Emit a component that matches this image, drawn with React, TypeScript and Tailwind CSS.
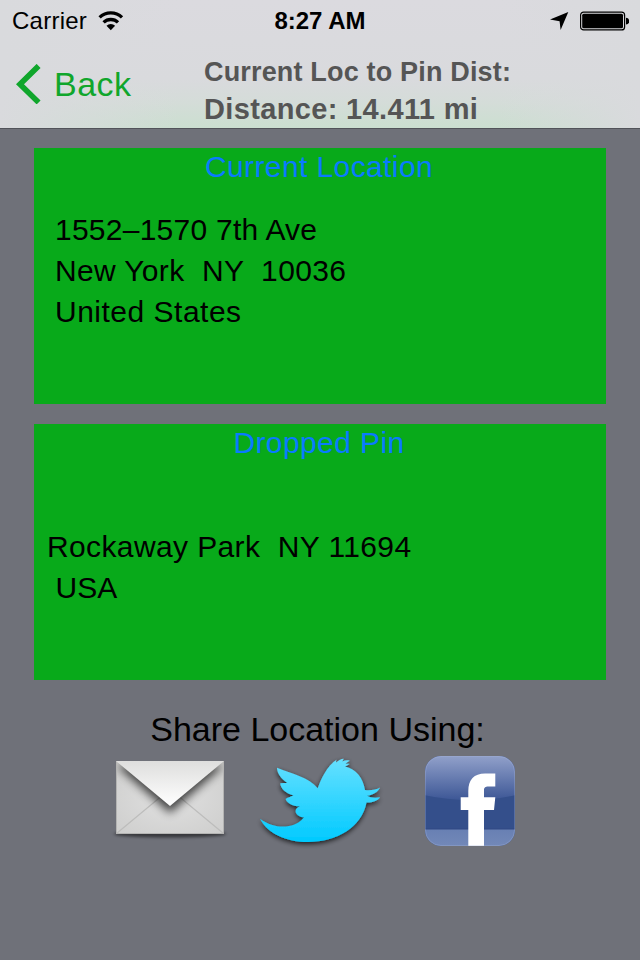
import type { ReactNode } from "react";

const CURRENT_ADDRESS = [
  { text: "1552–1570 7th Ave", tracking: "tracking-[0.25px]" },
  { text: "New York  NY  10036", tracking: "tracking-[0.35px]" },
  { text: "United States", tracking: "tracking-[0.5px]" },
];
const PIN_ADDRESS = [
  { text: "Rockaway Park  NY 11694", tracking: "tracking-[0.38px]" },
  { text: " USA", tracking: "tracking-[0.1px]" },
];

function WifiIcon() {
  return (
    <svg className="w-[26px] h-[20px]" viewBox="0 0 26 20" fill="none" stroke="#000" strokeWidth="3.3">
      <path d="M1.600 6.400a16.200 16.200 0 0 1 22.400 0" />
      <path d="M5.600 11.400a10.400 10.400 0 0 1 14.400 0" />
      <path d="M12.800 19.200l-4.300-4.500a6 6 0 0 1 8.600 0z" fill="#000" stroke="none" />
    </svg>
  );
}

function StatusBar() {
  return (
    <div className="grid grid-cols-3 items-center h-10 pl-3 pr-[11px]">
      <div className="flex items-center">
        <span className="text-[24px] leading-[41px] tracking-[0.25px]">Carrier</span>
        <span className="ml-[11px]"><WifiIcon /></span>
      </div>
      <div className="pr-px text-center text-[24px] leading-[41px] font-bold">8:27 AM</div>
      <div className="flex items-center justify-end gap-[11px]">
        <svg className="w-[19px] h-[19px]" viewBox="0 0 19 19">
          <path d="M18.300 1L10.600 19L9.600 10.300L0 8.500z" fill="#000" />
        </svg>
        <svg className="w-[49px] h-[20px]" viewBox="0 0 49 20">
          <rect x="0.6" y="1.1" width="44" height="17.8" rx="3" fill="none" stroke="#000" strokeWidth="1.2" />
          <rect x="2.2" y="2.7" width="40.8" height="14.6" rx="1.5" fill="#000" />
          <path d="M46 6.800a3.300 3.300 0 0 1 0 6.600z" fill="#000" />
        </svg>
      </div>
    </div>
  );
}

function NavBar() {
  return (
    <div className="flex h-[88px]">
      <button className="flex items-center w-[204px] pl-4 text-[#10a62c]">
        <svg className="w-[25px] h-[40px]" viewBox="0 0 25 40" fill="none" stroke="currentColor" strokeWidth="5.600">
          <path d="M22.600 1.900L4 20.200L22.600 38.400" />
        </svg>
        <span className="ml-[13px] text-[34px] leading-[40px] tracking-[0.5px]">Back</span>
      </button>
      <div className="pt-[14px] text-[#555555] font-bold whitespace-nowrap">
        <div className="text-[27px] leading-[37px] tracking-[0.17px]">Current Loc to Pin Dist:</div>
        <div className="text-[29px] leading-[37px] tracking-[0.35px]">Distance: 14.411 mi</div>
      </div>
    </div>
  );
}

function LocationCard({ title, children }: { title: string; children: ReactNode }) {
  return (
    <section className="h-64 bg-[#08aa1a]">
      <h2 className="h-9 pt-px pr-[2px] text-center text-[30px] leading-[36px] tracking-[0.4px] text-[#0a7aff]">{title}</h2>
      {children}
    </section>
  );
}

function AddressLines({ lines }: { lines: { text: string; tracking: string }[] }) {
  return (
    <>
      {lines.map(line => (
        <p key={line.text} className={`whitespace-pre text-[30px] leading-[41px] ${line.tracking}`}>{line.text}</p>
      ))}
    </>
  );
}

function MailIcon() {
  return (
    <svg className="w-[120px] h-[90px]" viewBox="0 0 120 90">
      <defs>
        <linearGradient id="mailFlap" x1="0" y1="0" x2="0" y2="1">
          <stop offset="0" stopColor="#dededd" />
          <stop offset="1" stopColor="#ffffff" />
        </linearGradient>
        <radialGradient id="mailBody" cx="0.5" cy="0.5" r="0.65">
          <stop offset="0" stopColor="#e0e0e0" />
          <stop offset="1" stopColor="#cfcfce" />
        </radialGradient>
        <filter id="mailBlur" x="-20%" y="-50%" width="140%" height="200%">
          <feGaussianBlur stdDeviation="5" />
        </filter>
        <filter id="mailBase" x="-20%" y="-100%" width="140%" height="300%">
          <feGaussianBlur stdDeviation="1.8" />
        </filter>
        <clipPath id="mailClip"><rect x="6" y="6" width="108" height="73" /></clipPath>
      </defs>
      <ellipse cx="60" cy="79" rx="56" ry="3.6" fill="#000" opacity="0.5" filter="url(#mailBase)" />
      <rect x="6" y="6" width="108" height="73" fill="url(#mailBody)" />
      <path d="M6.500 78.500L60 34l53.500 44.500" fill="none" stroke="#bdbdbc" strokeWidth="1.2" />
      <g clipPath="url(#mailClip)">
        <path d="M6 10h108L60 58z" fill="#000" opacity="0.7" filter="url(#mailBlur)" />
      </g>
      <rect x="6.5" y="6.5" width="107" height="72" fill="none" stroke="#b4b4b3" />
      <path d="M6 6h108L60 51z" fill="url(#mailFlap)" />
    </svg>
  );
}

function TwitterIcon() {
  return (
    <svg className="w-[140px] h-[105px]" viewBox="0 0 140 105">
      <defs>
        <linearGradient id="bird" x1="0" y1="0" x2="0" y2="1">
          <stop offset="0" stopColor="#66e0ff" />
          <stop offset="1" stopColor="#00caff" />
        </linearGradient>
        <filter id="birdShadow" x="-10%" y="-10%" width="120%" height="120%">
          <feDropShadow dx="0" dy="2" stdDeviation="2.4" floodColor="#000" floodOpacity="0.75" />
        </filter>
      </defs>
      <path
        fill="url(#bird)"
        filter="url(#birdShadow)"
        d="M10 68.7C20 76 30 77.500 39 76C46 75 51 71.500 54 67.300C49 67.300 45.500 64 45.600 61C45.700 58.500 48 57 50 56.300C43 56.500 36 52.500 35.700 49C37 48 41 46.500 43.500 45.600C36 43.500 30 38 30.300 33.300C32.500 33 35 33 37.300 33C31 28.500 27 23 27 17.700C42 24 59 27 67.700 38.300C71 29 77 16 86.500 9.700C86 11 86 12 86 12.600C88 10.500 91 8.800 93.800 8.700C93 10 92.500 10.900 92.300 11.500C94.500 10.500 97 10 99.800 10.700C98 11.800 96.500 12.800 95.500 13.800C97.500 13.600 99 13.500 99.500 14C98 15 96.500 16 95 16.600C106 19 113 28 115 40C120 40.500 126 40 130.200 37.500C128 42 123 45 117 45.800C120 47.800 125 48 130.200 47.300C127 51.500 121 53 116.500 52.500C112 77 87 92 58 92C36 92 17 83 10 68.700Z"
      />
    </svg>
  );
}

function FacebookIcon() {
  return (
    <svg className="w-[92px] h-[92px]" viewBox="0 0 92 92">
      <defs>
        <linearGradient id="fbGloss" x1="0" y1="0" x2="0" y2="1">
          <stop offset="0" stopColor="#93a2cb" />
          <stop offset="1" stopColor="#3d5796" />
        </linearGradient>
        <linearGradient id="fbFoot" x1="0" y1="0" x2="0" y2="1">
          <stop offset="0" stopColor="#6880b3" />
          <stop offset="1" stopColor="#7389b8" />
        </linearGradient>
        <clipPath id="fbClip"><rect x="1" y="1" width="90" height="90" rx="16" /></clipPath>
      </defs>
      <g clipPath="url(#fbClip)">
        <rect width="92" height="92" fill="#344f8b" />
        <path d="M0 0h92v40Q46 50 0 40z" fill="url(#fbGloss)" />
        <rect y="74" width="92" height="18" fill="url(#fbFoot)" />
        <path d="M0 74h92" stroke="#304983" strokeWidth="1" />
        <path
          d="M44.300 92V55H36.700V42.300h7.600V36C44.300 24.500 50 18.400 61 18.400h10.300V31.500H64.500C61 31.500 60 32.500 60 35.500v6.800h11.300L70 55H60v37z"
          fill="#fff"
        />
      </g>
      <rect x="1.500" y="1.500" width="89" height="89" rx="15.500" fill="none" stroke="#a8b7dc" strokeOpacity="0.3" />
    </svg>
  );
}

export default function App() {
  return (
    <div className="flex flex-col w-[640px] h-[960px] overflow-hidden bg-[#6f7179] text-black font-['Liberation_Sans',Arial,sans-serif]">
      <header className="h-[129px] border-b border-[#515359] bg-[linear-gradient(to_bottom,#dbdadf_0%,#d9dadd_62%,#d5dcd9_78%,#cbdfd0_100%)]">
        <div className="h-full bg-[linear-gradient(to_right,#d9dadd_0%,#d9dadd99_12%,#d9dadd00_28%,#d9dadd00_78%,#d9dadd99_92%,#d9dadd_100%)]">
          <StatusBar />
          <NavBar />
        </div>
      </header>

      <main className="flex flex-col gap-5 px-[34px] pt-[19px]">
        <LocationCard title="Current Location">
          <div className="pt-[25px] pl-[21px]">
            <AddressLines lines={CURRENT_ADDRESS} />
          </div>
        </LocationCard>
        <LocationCard title="Dropped Pin">
          <div className="pt-[66px] pl-[13px]">
            <AddressLines lines={PIN_ADDRESS} />
          </div>
        </LocationCard>
      </main>

      <footer className="pt-[29px]">
        <p className="pr-[5px] text-center text-[34px] leading-[40px]">Share Location Using:</p>
        <div className="flex items-start pl-[110px]">
          <button className="pt-[6px]"><MailIcon /></button>
          <button className="ml-5 pt-px"><TwitterIcon /></button>
          <button className="ml-[34px] pt-[6px]"><FacebookIcon /></button>
        </div>
      </footer>
    </div>
  );
}
